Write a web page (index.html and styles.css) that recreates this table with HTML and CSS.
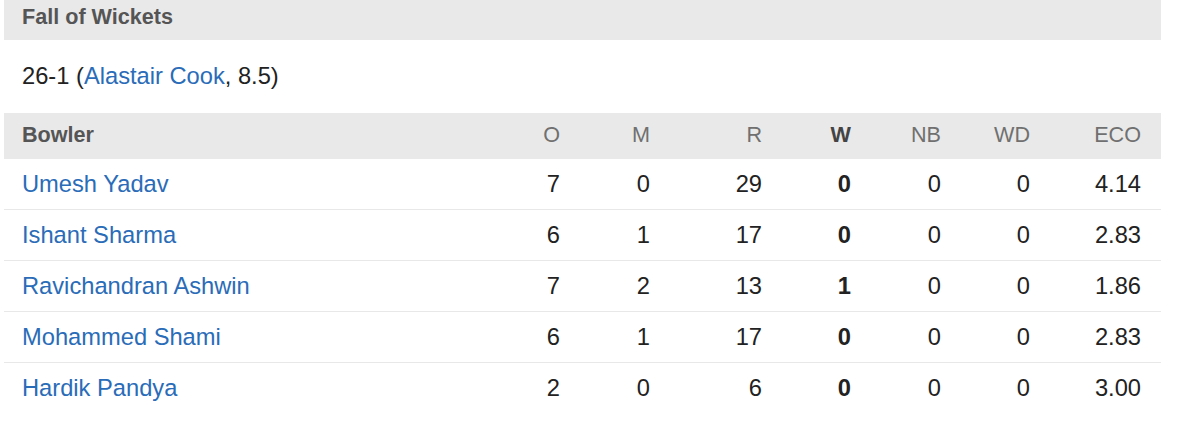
FILE: index.html
```html
<!DOCTYPE html>
<html lang="en">
<head>
<meta charset="utf-8">
<title>Fall of Wickets</title>
<link rel="stylesheet" href="styles.css">
</head>
<body>
<div class="card">
  <div class="section-head">Fall of Wickets</div>
  <div class="fow">26-1 (<a href="#">Alastair Cook</a>, 8.5)</div>
  <div class="bowling">
    <div class="row head">
      <div class="name">Bowler</div>
      <div class="num">O</div>
      <div class="num">M</div>
      <div class="num">R</div>
      <div class="num strong">W</div>
      <div class="num">NB</div>
      <div class="num">WD</div>
      <div class="num">ECO</div>
    </div>
    <div class="row">
      <div class="name"><a href="#">Umesh Yadav</a></div>
      <div class="num">7</div><div class="num">0</div><div class="num">29</div><div class="num strong">0</div><div class="num">0</div><div class="num">0</div><div class="num">4.14</div>
    </div>
    <div class="row">
      <div class="name"><a href="#">Ishant Sharma</a></div>
      <div class="num">6</div><div class="num">1</div><div class="num">17</div><div class="num strong">0</div><div class="num">0</div><div class="num">0</div><div class="num">2.83</div>
    </div>
    <div class="row">
      <div class="name"><a href="#">Ravichandran Ashwin</a></div>
      <div class="num">7</div><div class="num">2</div><div class="num">13</div><div class="num strong">1</div><div class="num">0</div><div class="num">0</div><div class="num">1.86</div>
    </div>
    <div class="row">
      <div class="name"><a href="#">Mohammed Shami</a></div>
      <div class="num">6</div><div class="num">1</div><div class="num">17</div><div class="num strong">0</div><div class="num">0</div><div class="num">0</div><div class="num">2.83</div>
    </div>
    <div class="row last">
      <div class="name"><a href="#">Hardik Pandya</a></div>
      <div class="num">2</div><div class="num">0</div><div class="num">6</div><div class="num strong">0</div><div class="num">0</div><div class="num">0</div><div class="num">3.00</div>
    </div>
  </div>
</div>
</body>
</html>
```

FILE: styles.css
```css
html, body {
  margin: 0;
  padding: 0;
  background: #ffffff;
}

body {
  font-family: "Liberation Sans", Arial, sans-serif;
  color: #222222;
}

.card {
  margin-left: 4px;
  width: 1157px;
}

a {
  color: #2a6cb8;
  text-decoration: none;
}

.section-head {
  background: #e9e9e9;
  height: 40px;
  box-sizing: border-box;
  padding: 4px 0 0 18px;
  line-height: 26px;
  font-size: 21.6px;
  font-weight: bold;
  color: #555555;
}

.fow {
  height: 73px;
  box-sizing: border-box;
  padding: 22px 0 0 18px;
  line-height: 28px;
  font-size: 23.7px;
  color: #222222;
}

.row {
  display: grid;
  grid-template-columns: 1fr 90px 90px 112px 89px 90px 89px 111px;
  align-items: center;
  height: 51px;
  box-sizing: border-box;
  padding: 0 20px 0 18px;
  border-bottom: 1px solid #e8e8e8;
  font-size: 23.7px;
  color: #222222;
}

.row.head {
  height: 46px;
  padding-bottom: 2px;
  background: #e9e9e9;
  border-bottom: none;
  font-size: 21.6px;
  color: #707070;
}

.row.head .name {
  font-weight: bold;
  color: #555555;
}

.row.head .strong {
  color: #444444;
}

.row.last {
  border-bottom: none;
}

.num {
  text-align: right;
}

.strong {
  font-weight: bold;
}
```
